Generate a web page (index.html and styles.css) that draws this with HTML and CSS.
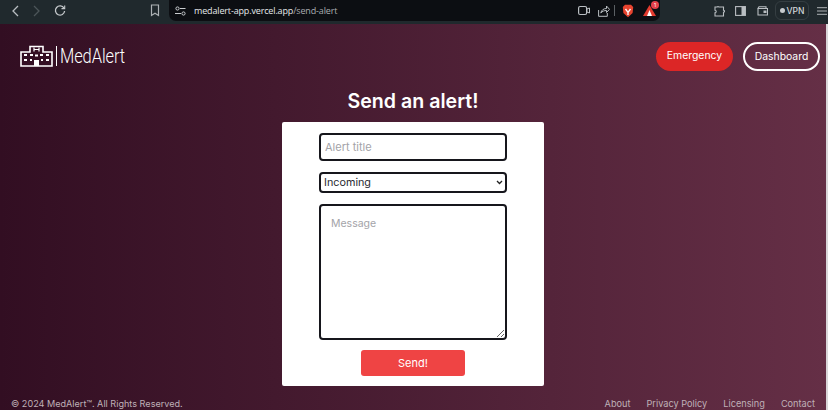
FILE: index.html
```html
<!DOCTYPE html>
<html lang="en">
<head>
<meta charset="utf-8">
<title>MedAlert</title>
<link rel="stylesheet" href="styles.css">
</head>
<body>
<div class="toolbar">
  <div class="nav-left">
    <svg class="ic nav-back" width="12" height="14" viewBox="0 0 12 14"><path d="M9 2 4 7l5 5" fill="none" stroke="#b9bec2" stroke-width="1.3"/></svg>
    <svg class="ic nav-fwd" width="12" height="14" viewBox="0 0 12 14"><path d="M3 2l5 5-5 5" fill="none" stroke="#4c5559" stroke-width="1.3"/></svg>
    <svg class="ic nav-reload" width="12" height="12" viewBox="0 0 12 12"><path d="M10 3.2A4.6 4.6 0 1 0 10.6 6" fill="none" stroke="#c4c8cb" stroke-width="1.3"/><path d="M7.5 3.6h3.2V.6" fill="none" stroke="#c4c8cb" stroke-width="1.1"/></svg>
    <svg class="ic nav-mark" width="10" height="13" viewBox="0 0 10 13"><path d="M1.5 1h7v10.5L5 9.2 1.5 11.500z" fill="none" stroke="#aeb3b6" stroke-width="1.2"/></svg>
  </div>
  <div class="urlbar">
    <svg class="tune" width="11" height="10" viewBox="0 0 11 10"><circle cx="2.500" cy="2.500" r="1.600" fill="none" stroke="#c9cccf"/><path d="M5 2.500h5.500M0 7.500h6" stroke="#c9cccf"/><circle cx="8.500" cy="7.500" r="1.600" fill="none" stroke="#c9cccf"/></svg>
    <span class="url"><span class="url-host">medalert-app.vercel.app</span><span class="url-path">/send-alert</span></span>
    <div class="url-icons">
      <svg class="i-video" width="12" height="11" viewBox="0 0 12 11"><rect x=".6" y="1.500" width="8" height="8" rx="1.500" fill="none" stroke="#b9bec2" stroke-width="1.200"/><path d="M8.800 4 11.500 3v5L8.800 7z" fill="none" stroke="#b9bec2"/></svg>
      <svg class="i-share" width="12" height="12" viewBox="0 0 12 12"><path d="M.6 5v6.300h8.700V8M2.800 8c.5-3 3-4.500 5.700-4.500V1L11.500 4.300 8.500 7.500V5.500C6.300 5.500 4.300 6.200 2.800 8z" fill="none" stroke="#b9bec2"/></svg>
      <span class="sep"></span>
      <svg class="i-brave" width="12" height="14" viewBox="0 0 12 14"><path d="M3 .8h6L11.200 3l-.6 6L6 13.200 1.400 9 .8 3z" fill="#e8442f"/><path d="M3.500 5 6 8.500 8.500 5M6 8.500V11" stroke="#fff" stroke-width="1.300" fill="none"/></svg>
      <span class="alert-wrap">
        <svg width="13" height="11" viewBox="0 0 13 11"><path d="M6.500 0 13 11H0z" fill="#e23a2e"/><path d="M6.500 5 9 11H4z" fill="#fff"/></svg>
        <span class="alert-badge">1</span>
      </span>
    </div>
  </div>
  <div class="nav-right">
    <svg class="i-ext" width="11" height="12" viewBox="0 0 11 12"><path d="M1 2h2.200a1 1 0 0 1 1.600 0H9.500v3.300a1 1 0 0 1 0 2V11H1V7.700a1 1 0 0 0 0-2.400z" fill="none" stroke="#b9bec2" stroke-width="1.100"/></svg>
    <svg class="i-side" width="11" height="10" viewBox="0 0 11 10"><rect x=".6" y=".6" width="9.800" height="8.800" fill="none" stroke="#b9bec2" stroke-width="1.100"/><rect x="6.500" y="1" width="3.500" height="8" fill="#b9bec2"/></svg>
    <svg class="i-wallet" width="11" height="10" viewBox="0 0 11 10"><path d="M1 2.500V9h9.500V2.500H1L2 .8h7V2.500" fill="none" stroke="#b9bec2" stroke-width="1.100"/><rect x="6.500" y="4.500" width="3" height="2.500" fill="#b9bec2"/></svg>
    <span class="vpn"><span class="vpn-dot"></span>VPN</span>
    <svg class="i-menu" width="10" height="8" viewBox="0 0 10 8"><path d="M0 .7h10M0 4h10M0 7.300h10" stroke="#aeb3b6"/></svg>
  </div>
</div>
<div class="page">
  <header class="site-header">
    <div class="logo">
      <svg width="33" height="22" viewBox="0 0 33 22" class="logo-mark">
        <path d="M1 7h9V1.500h13V7h9v14H1z" fill="none" stroke="#fff" stroke-width="1.600"/>
        <path d="M14 2.500v4M19 2.500v4M14 4.500h5" stroke="#fff" stroke-width="1.200"/>
        <path d="M14 21v-6h5v6" fill="#fff"/>
        <path d="M4 10h3M4 15h3M10 10h3M10 15h2M20 10h3M21 15h2M26 10h3M26 15h3M15 10.500h3" stroke="#fff" stroke-width="2.200"/>
      </svg>
      <span class="logo-bar"></span>
      <span class="logo-text">MedAlert</span>
    </div>
    <nav class="header-actions">
      <a class="btn btn-emergency">Emergency</a>
      <a class="btn btn-dashboard">Dashboard</a>
    </nav>
  </header>
  <main class="content">
    <h1 class="title">Send an alert!</h1>
    <form class="card">
      <input class="field field-title" type="text" placeholder="Alert title">
      <select class="field field-select"><option>Incoming</option></select>
      <textarea class="field field-message" placeholder="Message"></textarea>
      <button class="send" type="button">Send!</button>
    </form>
  </main>
  <footer class="site-footer">
    <span class="copyright">© 2024 MedAlert™. All Rights Reserved.</span>
    <div class="footer-links"><a>About</a><a>Privacy Policy</a><a>Licensing</a><a>Contact</a></div>
  </footer>
</div>
</body>
</html>
```
FILE: styles.css
```css
* { box-sizing: border-box; }
html, body { margin: 0; height: 100%; overflow: hidden; }
body { font-family: Inter, "Liberation Sans", sans-serif; background: #2e0a1e; }
.toolbar { height: 24px; background: #20292d; display: flex; align-items: flex-start; }
.nav-left { width: 169px; height: 21px; display: flex; align-items: center; flex: none; padding-left: 9px; }
.nav-back { margin-right: 10px; }
.nav-fwd { margin-right: 11px; }
.nav-reload { margin-right: 85px; }
.nav-mark { margin-left: -1px; }
.urlbar { width: 491px; height: 21px; flex: none; background: #0c0e12; border-radius: 0 0 7px 7px; display: flex; align-items: center; padding: 0 4px 0 6px; }
.tune { margin-right: 8px; }
.url { font-family: "Open Sans", sans-serif; font-size: 9px; letter-spacing: -.15px; flex: 1; white-space: nowrap; }
.url-host { color: #e6e8ea; }
.url-path { color: #a9adb1; }
.url-icons { display: flex; align-items: center; }
.i-share { margin-left: 8px; }
.sep { width: 1px; height: 11px; background: #5b6064; margin-left: 4px; }
.i-brave { margin-left: 7px; }
.alert-wrap { position: relative; display: flex; margin-left: 9px; }
.alert-badge { position: absolute; top: -4px; right: -3px; width: 8px; height: 8px; border-radius: 50%; background: #e5404a; color: #fff; font-size: 5px; line-height: 8px; text-align: center; }
.nav-right { flex: 1; height: 21px; display: flex; align-items: center; padding-left: 54px; }
.i-side { margin-left: 10px; }
.i-wallet { margin-left: 11px; }
.vpn { height: 19px; width: 34px; margin-left: 7px; border: 1px solid #353e42; border-radius: 6px; color: #d4d7da; font-size: 8.500px; font-weight: 500; display: flex; align-items: center; justify-content: center; gap: 2px; flex: none; }
.vpn-dot { width: 5px; height: 5px; border-radius: 50%; background: #c7cbce; }
.i-menu { margin-left: 8px; flex: none; }
.page { height: 386px; background: linear-gradient(90deg, #320e22 0%, #652f46 100%); border-right: 2px solid #d9d6d8; display: flex; flex-direction: column; overflow: hidden; }
.site-header { height: 59px; display: flex; justify-content: space-between; align-items: flex-start; padding: 18px 6px 0 20px; flex: none; }
.logo { display: flex; align-items: center; height: 27px; padding-top: 1px; color: #fff; }
.logo-mark { display: block; }
.logo-bar { width: 1px; height: 20px; background: #fff; margin: 0 3px; }
.logo-text { font-family: Roboto, sans-serif; font-weight: 300; font-size: 16.500px; letter-spacing: -.1px; transform: scaleY(1.2); }
.header-actions { display: flex; gap: 10px; }
.btn { height: 29px; border-radius: 15px; color: #fff; font-size: 10.400px; display: flex; align-items: center; justify-content: center; }
.btn-emergency { width: 77px; background: #dc2626; padding-bottom: 2px; }
.btn-dashboard { width: 77px; border: 2px solid #fff; }
.content { display: flex; flex-direction: column; align-items: center; height: 303px; flex: none; }
.title { margin: 5px 0 8px; font-size: 19.600px; line-height: 26px; font-weight: 600; color: #fff; }
.card { width: 262px; height: 264px; background: #fff; border-radius: 2px; display: flex; flex-direction: column; align-items: center; padding-top: 11px; }
.field { display: block; width: 188px; border: 2px solid #16161c; border-radius: 4px; background: #fff; font-family: Inter, sans-serif; color: #2a2a30; outline: none; }
.field::placeholder { color: #a3a3a8; opacity: 1; }
.field-title { height: 28px; padding: 0 4px; font-size: 11px; }
.field-select { height: 21px; margin-top: 11px; padding: 0 0 0 3px; font-size: 10.800px; appearance: none; background-image: url("data:image/svg+xml,%3Csvg xmlns='http://www.w3.org/2000/svg' width='7' height='5'%3E%3Cpath d='M1 1l2.500 2.500L6 1' fill='none' stroke='%23222' stroke-width='1.300'/%3E%3C/svg%3E"); background-repeat: no-repeat; background-position: right 2px center; }
.field-message { height: 136px; margin-top: 11px; padding: 11px 10px; font-size: 10.500px; resize: vertical; }
.send { width: 104px; height: 26px; margin-top: 10px; border: 0; border-radius: 3px; background: #ef4444; color: #fff; font-family: Inter, sans-serif; font-size: 11px; }
.site-footer { display: flex; justify-content: space-between; font-size: 9.100px; line-height: 12px; color: #bfb0b7; padding: 12px 11px 0 11px; flex: none; }
.footer-links { display: flex; gap: 16px; font-size: 9.200px; }
```
